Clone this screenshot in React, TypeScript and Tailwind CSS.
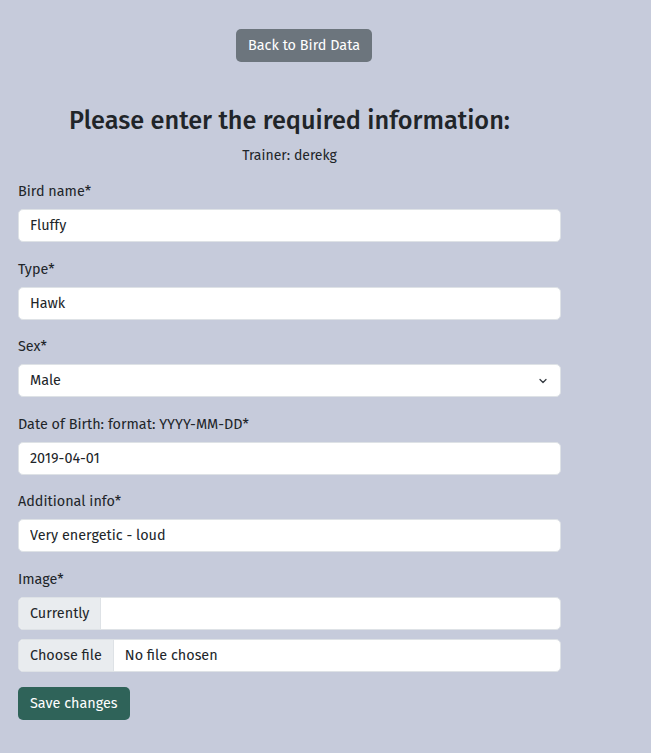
import { ChevronDown } from 'lucide-react'

const font = { fontFamily: '"Fira Sans", Roboto, "Noto Sans", sans-serif' }

function Field({ label, children }: { label: string; children: React.ReactNode }) {
  return (
    <div className="mb-[16.6px]">
      <label className="block mb-[7px] leading-[21px]">{label}</label>
      {children}
    </div>
  )
}

const inputCls =
  'block w-full h-[33px] px-[11px] bg-white border border-[#dee2e6] rounded-[5px] text-[#212529] outline-none'

export default function App() {
  return (
    <div className="min-h-[753px] bg-[#c6cbdb] text-[#212529] text-[14.4px]" style={font}>
      <div className="pt-[29px] pl-[236px]">
        <button className="h-[33px] px-[12px] rounded-[5px] bg-[#6c757d] text-white">
          Back to Bird Data
        </button>
      </div>

      <form className="w-[543px] ml-[18px]">
        <h2 className="mt-[43px] text-center text-[25.3px] font-medium leading-[31px]">
          Please enter the required information:
        </h2>
        <p className="mt-[10px] mb-[15px] text-center text-[14px] leading-[20px]">Trainer: derekg</p>

        <Field label="Bird name*">
          <input className={inputCls} defaultValue="Fluffy" />
        </Field>
        <Field label="Type*">
          <input className={inputCls} defaultValue="Hawk" />
        </Field>
        <Field label="Sex*">
          <div className="relative">
            <select className={inputCls + ' appearance-none'} defaultValue="Male">
              <option>Male</option>
              <option>Female</option>
            </select>
            <ChevronDown
              className="absolute right-[12px] top-[11px] size-[12px] text-[#343a40] pointer-events-none"
              strokeWidth={2.5}
            />
          </div>
        </Field>
        <Field label="Date of Birth: format: YYYY-MM-DD*">
          <input className={inputCls} defaultValue="2019-04-01" />
        </Field>
        <Field label="Additional info*">
          <input className={inputCls} defaultValue="Very energetic - loud" />
        </Field>

        <div className="mb-[15px]">
          <label className="block mb-[7px] leading-[21px]">Image*</label>
          <div className="flex h-[33px] mb-[9px] bg-white border border-[#dee2e6] rounded-[5px] overflow-hidden">
            <span className="flex items-center px-[11px] bg-[#e9ecef] border-r border-[#dee2e6]">
              Currently
            </span>
            <span className="flex-1" />
          </div>
          <div className="flex h-[33px] bg-white border border-[#dee2e6] rounded-[5px] overflow-hidden">
            <span className="flex items-center px-[11px] bg-[#e9ecef] border-r border-[#dee2e6]">
              Choose file
            </span>
            <span className="flex items-center pl-[11px]">No file chosen</span>
          </div>
        </div>

        <button
          type="button"
          className="h-[33px] px-[12px] rounded-[5px] bg-[#2f6359] text-white"
        >
          Save changes
        </button>
      </form>
    </div>
  )
}
